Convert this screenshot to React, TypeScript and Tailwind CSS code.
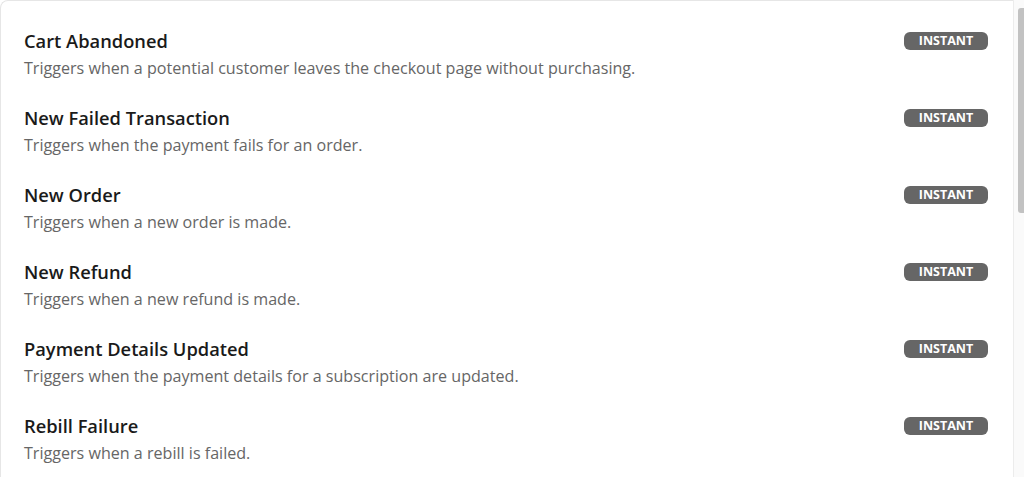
const triggers = [
  {
    title: 'Cart Abandoned',
    description: 'Triggers when a potential customer leaves the checkout page without purchasing.',
  },
  { title: 'New Failed Transaction', description: 'Triggers when the payment fails for an order.' },
  { title: 'New Order', description: 'Triggers when a new order is made.' },
  { title: 'New Refund', description: 'Triggers when a new refund is made.' },
  {
    title: 'Payment Details Updated',
    description: 'Triggers when the payment details for a subscription are updated.',
  },
  { title: 'Rebill Failure', description: 'Triggers when a rebill is failed.' },
];

export default function App() {
  return (
    <div className="flex h-[477px] w-[1024px] overflow-hidden bg-white font-['Open_Sans',sans-serif]">
      {/* Trigger list */}
      <div className="flex-1 rounded-tl-lg border-l border-t border-[#e6e6e6] bg-white pt-[17px]">
        {triggers.map((trigger) => (
          <div key={trigger.title} className="flex h-[77px] items-start justify-between pl-[23px] pr-[25px] pt-3">
            <div>
              <div className="text-[18.3px] font-semibold leading-[22px] text-[#1a1a1a]">{trigger.title}</div>
              <div className="mt-[6px] text-[16.1px] leading-5 text-[#666666]">{trigger.description}</div>
            </div>
            <span className="mt-[2px] flex h-[18px] w-[84px] items-center justify-center rounded-[6px] bg-[#666666] text-[12.5px] font-bold leading-none text-white">
              INSTANT
            </span>
          </div>
        ))}
      </div>

      {/* Scrollbar */}
      <div className="flex w-[11px] justify-end border-l border-[#ececec] bg-[#fafafa] pt-[8px]">
        <div className="h-[205px] w-[6px] rounded-l-[3px] bg-[#c2c2c2]" />
      </div>
    </div>
  );
}
